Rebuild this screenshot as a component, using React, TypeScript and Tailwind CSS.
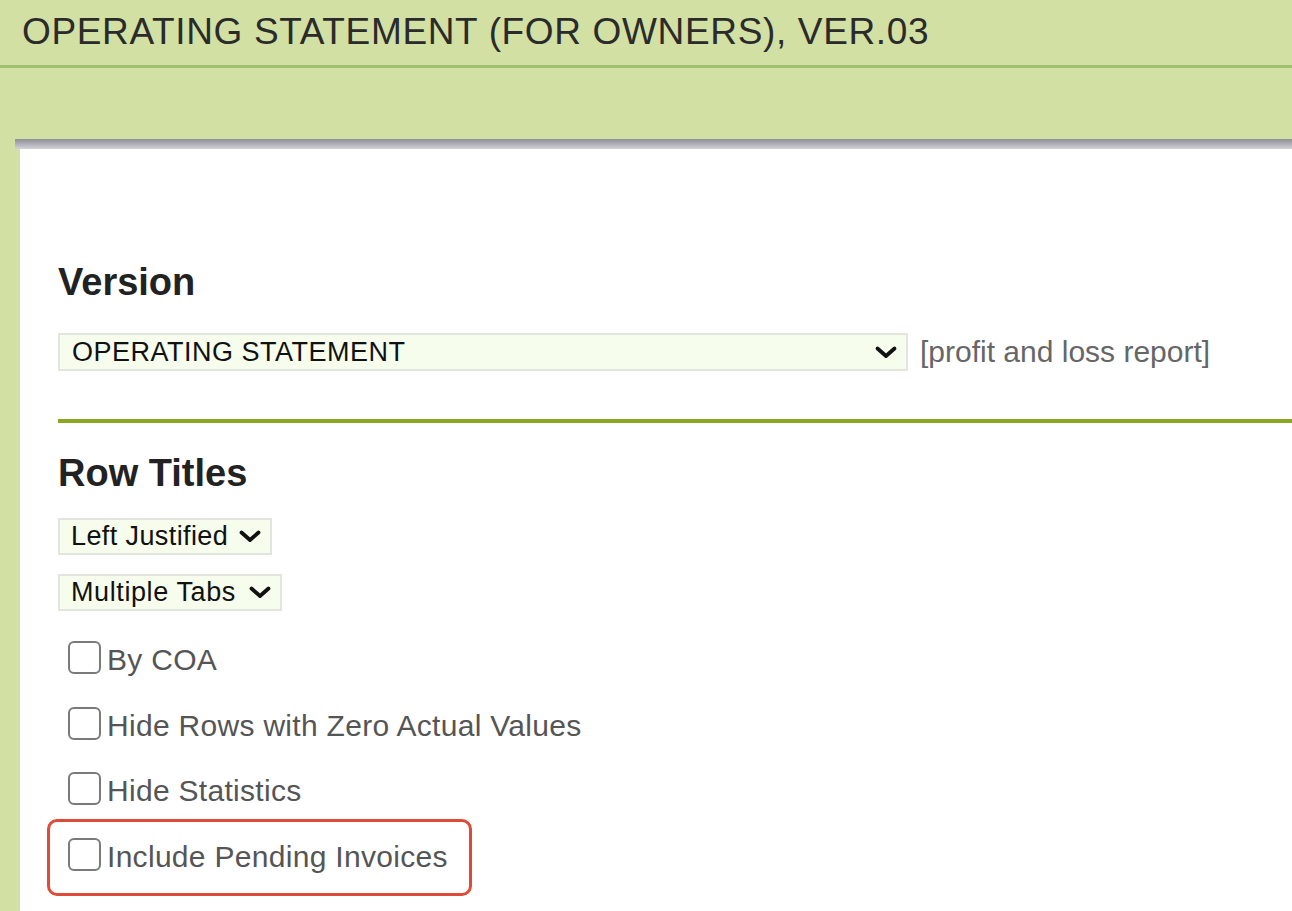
import React from 'react';

const Chevron = () => (
  <svg width="24" height="15" viewBox="0 0 24 15" fill="none">
    <path d="M3.5 3.5 L12 11 L20.5 3.5" stroke="#111" strokeWidth="3.8" strokeLinecap="round" strokeLinejoin="round" />
  </svg>
);

function FakeSelect({ label, className }: { label: string; className: string }) {
  return (
    <div className={`flex items-center justify-between bg-[#f6fdec] border-2 border-[#e2e4de] text-[#111] leading-none ${className}`}>
      <span>{label}</span>
      <Chevron />
    </div>
  );
}

function Check({ label }: { label: string }) {
  return (
    <label className="flex items-end h-[32px] gap-[6px] text-[30px] leading-none text-[#555] tracking-[0.3px]">
      <span className="w-[33px] h-[33px] rounded-[6px] border-2 border-[#7a7a7a] bg-white shrink-0" />
      <span className="translate-y-[1px]">{label}</span>
    </label>
  );
}

export default function App() {
  return (
    <div className="w-[1292px] h-[911px] overflow-hidden bg-[#d2e0a4]" style={{ fontFamily: '"Liberation Sans", Arial, sans-serif' }}>
      {/* Title bar */}
      <div className="h-[68px] pl-[22px] pt-[13px] border-b-[3px] border-[#a0c070]">
        <h1 className="text-[37px] leading-none text-[#2b2b2b] tracking-[0.65px]">OPERATING STATEMENT (FOR OWNERS), VER.03</h1>
      </div>

      <div className="h-[71px]" />

      {/* Panel */}
      <div className="ml-[15px]">
        <div className="h-[10px] bg-gradient-to-b from-[#8e8f98] to-[#d3d3d7]" />
        <div className="ml-[5px] bg-white h-[800px] pl-[38px] pt-[114px]">
          <h2 className="text-[38px] font-bold text-[#222] leading-none">Version</h2>

          <div className="flex items-center mt-[32px]">
            <FakeSelect label="OPERATING STATEMENT" className="w-[850px] h-[38px] pl-[12px] pr-[8px] text-[27px] tracking-[0.5px]" />
            <span className="ml-[12px] text-[30px] leading-none text-[#666]">[profit and loss report]</span>
          </div>

          <div className="mt-[48px] h-[4px] bg-[#8aa81f]" />

          <h2 className="mt-[31px] text-[38px] font-bold text-[#222] leading-none">Row Titles</h2>

          <div className="mt-[26px] flex flex-col items-start gap-[19px]">
            <FakeSelect label="Left Justified" className="h-[37px] pl-[11px] pr-[8px] gap-[10px] text-[27px] tracking-[0.4px]" />
            <FakeSelect label="Multiple Tabs" className="h-[37px] pl-[11px] pr-[8px] gap-[12px] text-[27px] tracking-[0.6px]" />
          </div>

          <div className="mt-[31px] flex flex-col gap-[33.5px] pl-[10px]">
            <Check label="By COA" />
            <Check label="Hide Rows with Zero Actual Values" />
            <Check label="Hide Statistics" />
            <div className="-ml-[21px] -mt-[19.5px] w-[425px] h-[77px] rounded-[10px] border-[3px] border-[#df4b36] pl-[18px] pt-[17px]">
              <Check label="Include Pending Invoices" />
            </div>
          </div>
        </div>
      </div>
    </div>
  );
}
